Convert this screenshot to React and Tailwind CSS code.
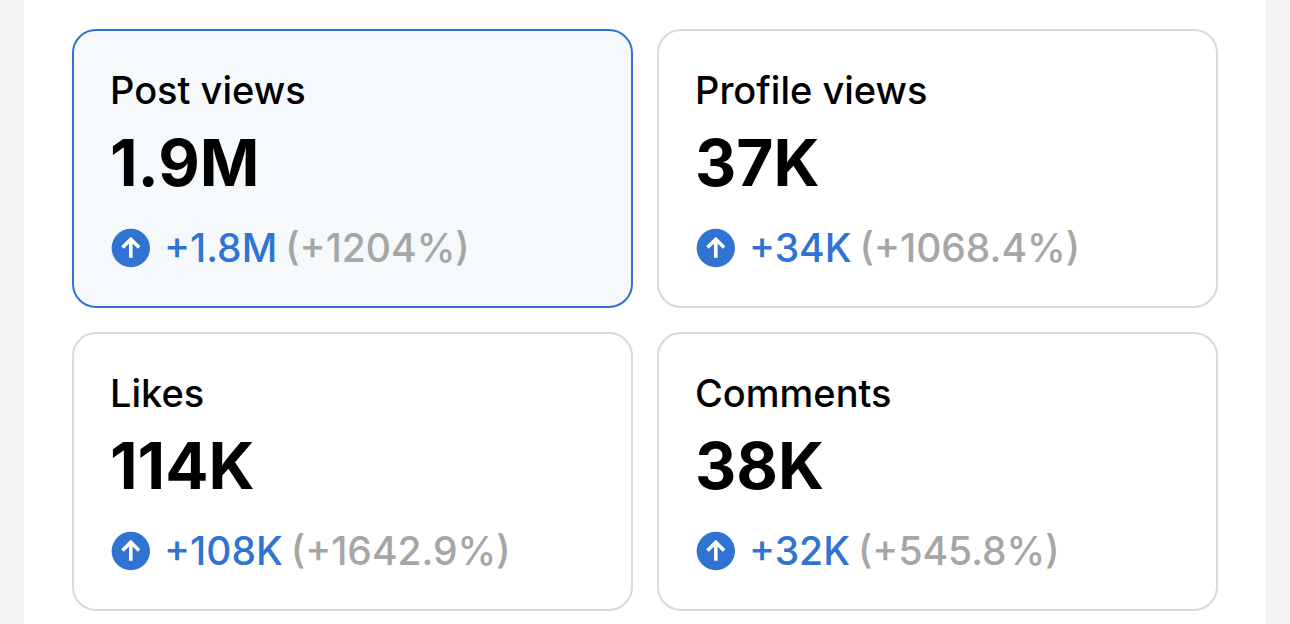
import React from "react";

const stats = [
  { label: "Post views", value: "1.9M", change: "+1.8M", percent: "(+1204%)" },
  { label: "Profile views", value: "37K", change: "+34K", percent: "(+1068.4%)" },
  { label: "Likes", value: "114K", change: "+108K", percent: "(+1642.9%)" },
  { label: "Comments", value: "38K", change: "+32K", percent: "(+545.8%)" },
];

function ArrowUpBadge() {
  return (
    <svg viewBox="0 0 40 40" className="w-10 h-10 shrink-0" aria-hidden="true">
      <circle cx="20.8" cy="20" r="19.2" fill="#3173d3" />
      <path
        d="M20.8 29.8V11.5M12.5 19.6L20.8 11.3L29.1 19.6"
        fill="none"
        stroke="white"
        strokeWidth="3.6"
      />
    </svg>
  );
}

function StatCard({ stat, selected, onSelect }) {
  return (
    <button
      type="button"
      aria-pressed={selected}
      onClick={onSelect}
      className={`rounded-3xl border-2 px-9 pt-[35px] pb-[30px] text-left ${
        selected ? "border-[#3173d3] bg-[#f5f9fc]" : "border-[#d9d9d9] bg-white"
      }`}
    >
      <span className="block text-[38px] leading-12 font-medium text-black">{stat.label}</span>
      <span className="block mt-[9px] text-[64px] leading-20 font-bold text-black">{stat.value}</span>
      <span className="flex items-center mt-[17px] text-[39px] leading-14 font-medium">
        <ArrowUpBadge />
        <span className="ml-3.5 text-[#3173d3]">{stat.change}</span>
        <span className="ml-2 text-[#a6a6a6]">{stat.percent}</span>
      </span>
    </button>
  );
}

function App() {
  const [selected, setSelected] = React.useState("Post views");

  return (
    <div className="min-h-screen bg-[#f4f4f4] px-6 font-[Inter,sans-serif]">
      <main className="min-h-screen bg-white px-12 pt-[29px] pb-3">
        <div className="grid grid-cols-2 gap-6">
          {stats.map((stat) => (
            <StatCard
              key={stat.label}
              stat={stat}
              selected={selected === stat.label}
              onSelect={() => setSelected(stat.label)}
            />
          ))}
        </div>
      </main>
    </div>
  );
}

export default App;
